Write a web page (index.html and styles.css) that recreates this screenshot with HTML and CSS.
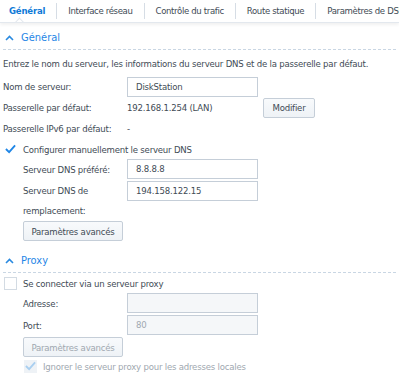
FILE: index.html
```html
<!DOCTYPE html>
<html lang="fr">
<head>
    <meta charset="UTF-8">
    <title>Réseau</title>
    <link rel="stylesheet" href="styles.css">
</head>
<body>
    <div class="tabs">
        <div class="tab active">Général</div>
        <div class="tab">Interface réseau</div>
        <div class="tab">Contrôle du trafic</div>
        <div class="tab">Route statique</div>
        <div class="tab">Paramètres de DSM</div>
    </div>

    <div class="section">
        <div class="section-title">
            <svg class="chevron" width="9" height="6" viewBox="0 0 9 6"><path d="M1 5 L4.5 1.5 L8 5" fill="none" stroke="#2a8ae0" stroke-width="1.6"/></svg>
            Général
        </div>
        <p class="desc">Entrez le nom du serveur, les informations du serveur DNS et de la passerelle par défaut.</p>

        <div class="row first">
            <label class="lbl">Nom de serveur:</label>
            <div class="field">DiskStation</div>
        </div>
        <div class="row">
            <label class="lbl">Passerelle par défaut:</label>
            <span class="value">192.168.1.254 (LAN)</span>
            <button class="btn btn-edit">Modifier</button>
        </div>
        <div class="row">
            <label class="lbl">Passerelle IPv6 par défaut:</label>
            <span class="value">-</span>
        </div>

        <div class="check-row">
            <span class="box checked">
                <svg width="12" height="10" viewBox="0 0 12 10"><path d="M1 5 L4.5 8.5 L11 1" fill="none" stroke="#1f86e6" stroke-width="2"/></svg>
            </span>
            Configurer manuellement le serveur DNS
        </div>
        <div class="sub">
            <div class="row sub-row">
                <label class="lbl">Serveur DNS préféré:</label>
                <div class="field">8.8.8.8</div>
            </div>
            <div class="row sub-row tall">
                <label class="lbl">Serveur DNS de remplacement:</label>
                <div class="field">194.158.122.15</div>
            </div>
            <button class="btn btn-adv">Paramètres avancés</button>
        </div>
    </div>

    <div class="section proxy">
        <div class="section-title">
            <svg class="chevron" width="9" height="6" viewBox="0 0 9 6"><path d="M1 5 L4.5 1.5 L8 5" fill="none" stroke="#2a8ae0" stroke-width="1.6"/></svg>
            Proxy
        </div>
        <div class="check-row">
            <span class="box"></span>
            Se connecter via un serveur proxy
        </div>
        <div class="sub">
            <div class="row sub-row">
                <label class="lbl">Adresse:</label>
                <div class="field disabled"></div>
            </div>
            <div class="row sub-row">
                <label class="lbl">Port:</label>
                <div class="field disabled">80</div>
            </div>
            <button class="btn btn-adv disabled">Paramètres avancés</button>
            <div class="check-row faded">
                <span class="box checked dim">
                    <svg width="12" height="10" viewBox="0 0 12 10"><path d="M1 5 L4.5 8.5 L11 1" fill="none" stroke="#a9cff0" stroke-width="2"/></svg>
                </span>
                Ignorer le serveur proxy pour les adresses locales
            </div>
        </div>
    </div>
</body>
</html>
```

FILE: styles.css
```css
*{
    margin: 0;
    padding: 0;
    box-sizing: border-box;
}

body{
    background-color: #fff;
    font-family: "DejaVu Sans Condensed", "Liberation Sans", sans-serif;
    font-size: 9.5px;
    letter-spacing: -0.2px;
    color: #414b55;
    width: 399px;
    height: 381px;
    overflow: hidden;
}

.tabs{
    display: flex;
    height: 23px;
    align-items: center;
    border-bottom: 1px solid #e3e8ee;
    box-shadow: 0 2px 3px rgba(0,0,0,0.06);
    white-space: nowrap;
    overflow: hidden;
    position: relative;
}

.tab{
    padding: 0 11px;
    border-right: 1px solid #d6dde5;
    line-height: 16px;
    letter-spacing: -0.35px;
    color: #414b55;
}

.tab.active{
    padding-left: 9px;
    color: #0f7ad8;
    font-weight: bold;
    letter-spacing: -0.2px;
    position: relative;
}

.tab.active::after{
    content: "";
    position: absolute;
    left: 16px;
    bottom: -7px;
    width: 6px;
    height: 6px;
    background: #fff;
    border-left: 1px solid #e3e8ee;
    border-top: 1px solid #e3e8ee;
    transform: rotate(45deg);
}

.section{
    padding: 0 3px;
}

.section-title{
    display: flex;
    align-items: center;
    gap: 7px;
    color: #1f86e6;
    font-size: 11px;
    letter-spacing: 0;
    height: 24px;
    margin-top: 3px;
    padding-left: 2px;
    border-bottom: 1px dashed #c9d6e3;
}

.desc{
    margin-top: 8px;
    line-height: 12px;
    white-space: nowrap;
}

.row{
    display: flex;
    align-items: center;
    height: 21px;
    white-space: nowrap;
}

.row.first{
    margin-top: 6px;
}

.lbl{
    width: 124px;
    flex-shrink: 0;
}

.field{
    width: 131px;
    height: 20px;
    border: 1px solid #c5ced8;
    padding: 0 8px;
    line-height: 18px;
    color: #414b55;
}

.field.disabled{
    background: #f5f7f9;
    color: #a0a8b0;
}

.value{
    width: 136px;
}

.btn{
    font-family: inherit;
    font-size: 9.5px;
    letter-spacing: -0.2px;
    color: #414b55;
    background: linear-gradient(#f8fafc, #eef2f6);
    border: 1px solid #c5ced8;
    border-radius: 2px;
    height: 20px;
}

.btn-edit{
    width: 52px;
}

.btn-adv{
    display: block;
    width: 100px;
    margin-top: 0;
}

.btn.disabled{
    color: #a0a8b0;
    margin-top: 2px;
}

.check-row{
    display: flex;
    align-items: center;
    gap: 6px;
    margin-top: 3px;
    height: 14px;
    white-space: nowrap;
}

.box{
    width: 13px;
    height: 13px;
    margin-left: 1px;
    border: 1px solid #d3dbe3;
    display: flex;
    align-items: center;
    justify-content: center;
    background: #fff;
}

.box.checked{
    border-color: #fff;
}

.box.dim{
    background: #eef2f6;
    border-color: #eef2f6;
}

.sub{
    padding-left: 20px;
}

.sub .lbl{
    width: 104px;
}

.sub-row{
    height: 20px;
    margin-top: 2px;
}

.sub .sub-row:first-child{
    margin-top: 3px;
}

.tall{
    height: 40px;
    align-items: flex-start;
}

.tall .lbl{
    line-height: 20px;
    white-space: normal;
}

.proxy{
    margin-top: 8px;
}

.faded{
    color: #a0a8b0;
    margin-top: 2px;
}
```
